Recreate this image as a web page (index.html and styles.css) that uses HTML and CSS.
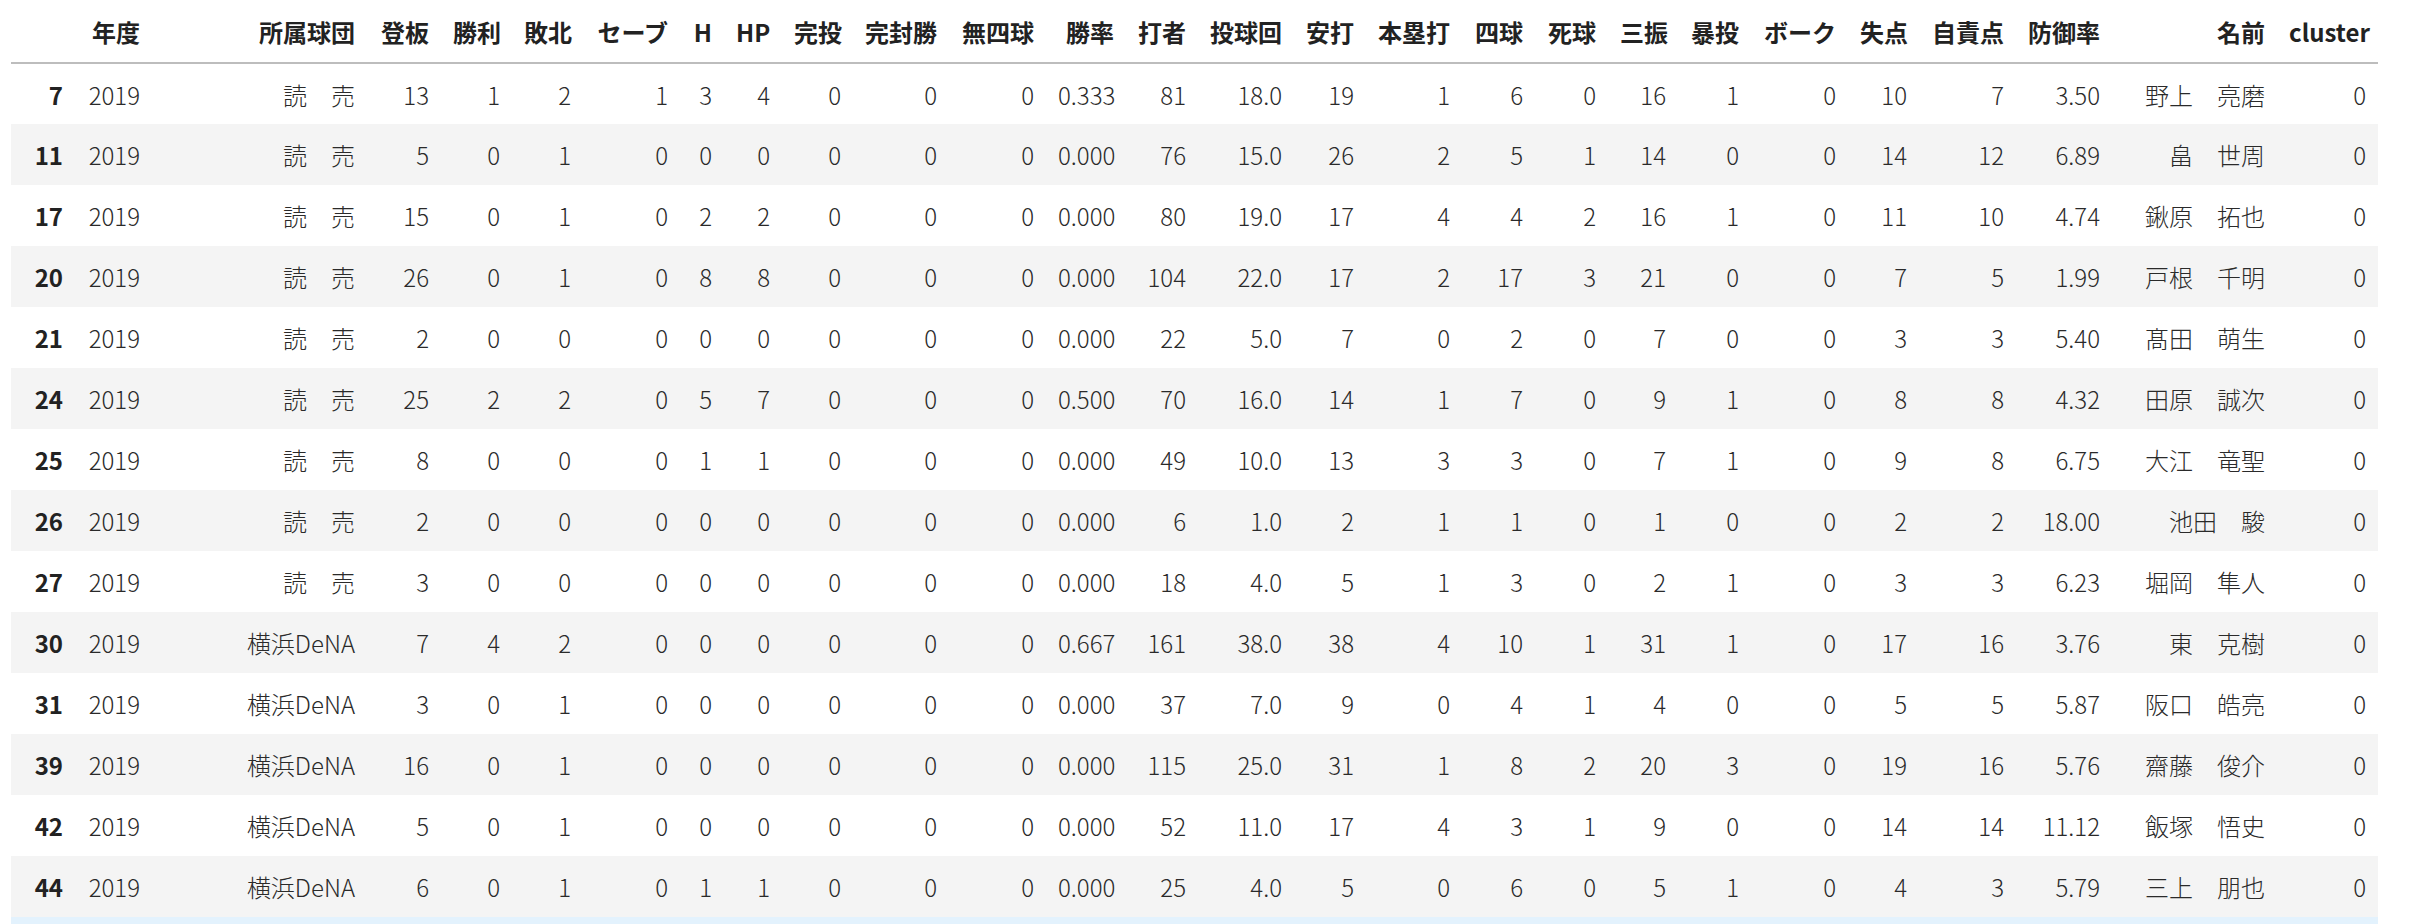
FILE: index.html
```html
<!DOCTYPE html>
<html lang="ja">
<head>
<meta charset="utf-8">
<title>DataFrame</title>
<link rel="stylesheet" href="styles.css">
</head>
<body>
<div class="output">
<table class="dataframe">
<colgroup>
<col class="w64"><col class="w77"><col class="w215"><col class="w74"><col class="w71"><col class="w71"><col class="w97"><col class="w44"><col class="w58"><col class="w71"><col class="w96"><col class="w97"><col class="w80"><col class="w72"><col class="w96"><col class="w72"><col class="w96"><col class="w73"><col class="w73"><col class="w70"><col class="w73"><col class="w97"><col class="w71"><col class="w97"><col class="w96"><col class="w165"><col class="w101">
</colgroup>
<thead>
<tr><th></th><th>年度</th><th>所属球団</th><th>登板</th><th>勝利</th><th>敗北</th><th>セーブ</th><th>H</th><th>HP</th><th>完投</th><th>完封勝</th><th>無四球</th><th>勝率</th><th>打者</th><th>投球回</th><th>安打</th><th>本塁打</th><th>四球</th><th>死球</th><th>三振</th><th>暴投</th><th>ボーク</th><th>失点</th><th>自責点</th><th>防御率</th><th>名前</th><th>cluster</th></tr>
</thead>
<tbody>
<tr><th>7</th><td>2019</td><td>読　売</td><td>13</td><td>1</td><td>2</td><td>1</td><td>3</td><td>4</td><td>0</td><td>0</td><td>0</td><td>0.333</td><td>81</td><td>18.0</td><td>19</td><td>1</td><td>6</td><td>0</td><td>16</td><td>1</td><td>0</td><td>10</td><td>7</td><td>3.50</td><td>野上　亮磨</td><td>0</td></tr>
<tr><th>11</th><td>2019</td><td>読　売</td><td>5</td><td>0</td><td>1</td><td>0</td><td>0</td><td>0</td><td>0</td><td>0</td><td>0</td><td>0.000</td><td>76</td><td>15.0</td><td>26</td><td>2</td><td>5</td><td>1</td><td>14</td><td>0</td><td>0</td><td>14</td><td>12</td><td>6.89</td><td>畠　世周</td><td>0</td></tr>
<tr><th>17</th><td>2019</td><td>読　売</td><td>15</td><td>0</td><td>1</td><td>0</td><td>2</td><td>2</td><td>0</td><td>0</td><td>0</td><td>0.000</td><td>80</td><td>19.0</td><td>17</td><td>4</td><td>4</td><td>2</td><td>16</td><td>1</td><td>0</td><td>11</td><td>10</td><td>4.74</td><td>鍬原　拓也</td><td>0</td></tr>
<tr><th>20</th><td>2019</td><td>読　売</td><td>26</td><td>0</td><td>1</td><td>0</td><td>8</td><td>8</td><td>0</td><td>0</td><td>0</td><td>0.000</td><td>104</td><td>22.0</td><td>17</td><td>2</td><td>17</td><td>3</td><td>21</td><td>0</td><td>0</td><td>7</td><td>5</td><td>1.99</td><td>戸根　千明</td><td>0</td></tr>
<tr><th>21</th><td>2019</td><td>読　売</td><td>2</td><td>0</td><td>0</td><td>0</td><td>0</td><td>0</td><td>0</td><td>0</td><td>0</td><td>0.000</td><td>22</td><td>5.0</td><td>7</td><td>0</td><td>2</td><td>0</td><td>7</td><td>0</td><td>0</td><td>3</td><td>3</td><td>5.40</td><td>髙田　萌生</td><td>0</td></tr>
<tr><th>24</th><td>2019</td><td>読　売</td><td>25</td><td>2</td><td>2</td><td>0</td><td>5</td><td>7</td><td>0</td><td>0</td><td>0</td><td>0.500</td><td>70</td><td>16.0</td><td>14</td><td>1</td><td>7</td><td>0</td><td>9</td><td>1</td><td>0</td><td>8</td><td>8</td><td>4.32</td><td>田原　誠次</td><td>0</td></tr>
<tr><th>25</th><td>2019</td><td>読　売</td><td>8</td><td>0</td><td>0</td><td>0</td><td>1</td><td>1</td><td>0</td><td>0</td><td>0</td><td>0.000</td><td>49</td><td>10.0</td><td>13</td><td>3</td><td>3</td><td>0</td><td>7</td><td>1</td><td>0</td><td>9</td><td>8</td><td>6.75</td><td>大江　竜聖</td><td>0</td></tr>
<tr><th>26</th><td>2019</td><td>読　売</td><td>2</td><td>0</td><td>0</td><td>0</td><td>0</td><td>0</td><td>0</td><td>0</td><td>0</td><td>0.000</td><td>6</td><td>1.0</td><td>2</td><td>1</td><td>1</td><td>0</td><td>1</td><td>0</td><td>0</td><td>2</td><td>2</td><td>18.00</td><td>池田　駿</td><td>0</td></tr>
<tr><th>27</th><td>2019</td><td>読　売</td><td>3</td><td>0</td><td>0</td><td>0</td><td>0</td><td>0</td><td>0</td><td>0</td><td>0</td><td>0.000</td><td>18</td><td>4.0</td><td>5</td><td>1</td><td>3</td><td>0</td><td>2</td><td>1</td><td>0</td><td>3</td><td>3</td><td>6.23</td><td>堀岡　隼人</td><td>0</td></tr>
<tr><th>30</th><td>2019</td><td>横浜DeNA</td><td>7</td><td>4</td><td>2</td><td>0</td><td>0</td><td>0</td><td>0</td><td>0</td><td>0</td><td>0.667</td><td>161</td><td>38.0</td><td>38</td><td>4</td><td>10</td><td>1</td><td>31</td><td>1</td><td>0</td><td>17</td><td>16</td><td>3.76</td><td>東　克樹</td><td>0</td></tr>
<tr><th>31</th><td>2019</td><td>横浜DeNA</td><td>3</td><td>0</td><td>1</td><td>0</td><td>0</td><td>0</td><td>0</td><td>0</td><td>0</td><td>0.000</td><td>37</td><td>7.0</td><td>9</td><td>0</td><td>4</td><td>1</td><td>4</td><td>0</td><td>0</td><td>5</td><td>5</td><td>5.87</td><td>阪口　皓亮</td><td>0</td></tr>
<tr><th>39</th><td>2019</td><td>横浜DeNA</td><td>16</td><td>0</td><td>1</td><td>0</td><td>0</td><td>0</td><td>0</td><td>0</td><td>0</td><td>0.000</td><td>115</td><td>25.0</td><td>31</td><td>1</td><td>8</td><td>2</td><td>20</td><td>3</td><td>0</td><td>19</td><td>16</td><td>5.76</td><td>齋藤　俊介</td><td>0</td></tr>
<tr><th>42</th><td>2019</td><td>横浜DeNA</td><td>5</td><td>0</td><td>1</td><td>0</td><td>0</td><td>0</td><td>0</td><td>0</td><td>0</td><td>0.000</td><td>52</td><td>11.0</td><td>17</td><td>4</td><td>3</td><td>1</td><td>9</td><td>0</td><td>0</td><td>14</td><td>14</td><td>11.12</td><td>飯塚　悟史</td><td>0</td></tr>
<tr><th>44</th><td>2019</td><td>横浜DeNA</td><td>6</td><td>0</td><td>1</td><td>0</td><td>1</td><td>1</td><td>0</td><td>0</td><td>0</td><td>0.000</td><td>25</td><td>4.0</td><td>5</td><td>0</td><td>6</td><td>0</td><td>5</td><td>1</td><td>0</td><td>4</td><td>3</td><td>5.79</td><td>三上　朋也</td><td>0</td></tr>
</tbody>
</table>
<div class="next-strip"></div>
</div>
</body>
</html>
```

FILE: styles.css
```css
html, body {
  margin: 0;
  padding: 0;
  background: #ffffff;
}

body {
  font-family: "Noto Sans CJK JP", "Noto Sans", sans-serif;
  font-size: 24px;
  color: #222222;
}

.output {
  padding-left: 11px;
  width: 2367px;
}

.dataframe {
  table-layout: fixed;
  width: 2367px;
  border-collapse: collapse;
  border-spacing: 0;
}

.dataframe th,
.dataframe td {
  text-align: right;
  vertical-align: middle;
  padding: 0 12px;
  white-space: nowrap;
  overflow: hidden;
  border: none;
}

.dataframe thead tr {
  height: 63px;
}

.dataframe thead {
  border-bottom: 2px solid #bdbdbd;
}

.dataframe th {
  font-weight: bold;
}

.dataframe td {
  font-weight: 300;
  color: #2a2a2a;
}

.dataframe tbody tr {
  height: 61px;
}

.dataframe tbody tr:nth-child(even) {
  background: #f4f4f4;
}

.next-strip {
  height: 8px;
  background: #e3f2fd;
}

.w44 { width: 44px; }
.w58 { width: 58px; }
.w64 { width: 64px; }
.w70 { width: 70px; }
.w71 { width: 71px; }
.w72 { width: 72px; }
.w73 { width: 73px; }
.w74 { width: 74px; }
.w77 { width: 77px; }
.w80 { width: 80px; }
.w96 { width: 96px; }
.w97 { width: 97px; }
.w101 { width: 101px; }
.w165 { width: 165px; }
.w215 { width: 215px; }
```
